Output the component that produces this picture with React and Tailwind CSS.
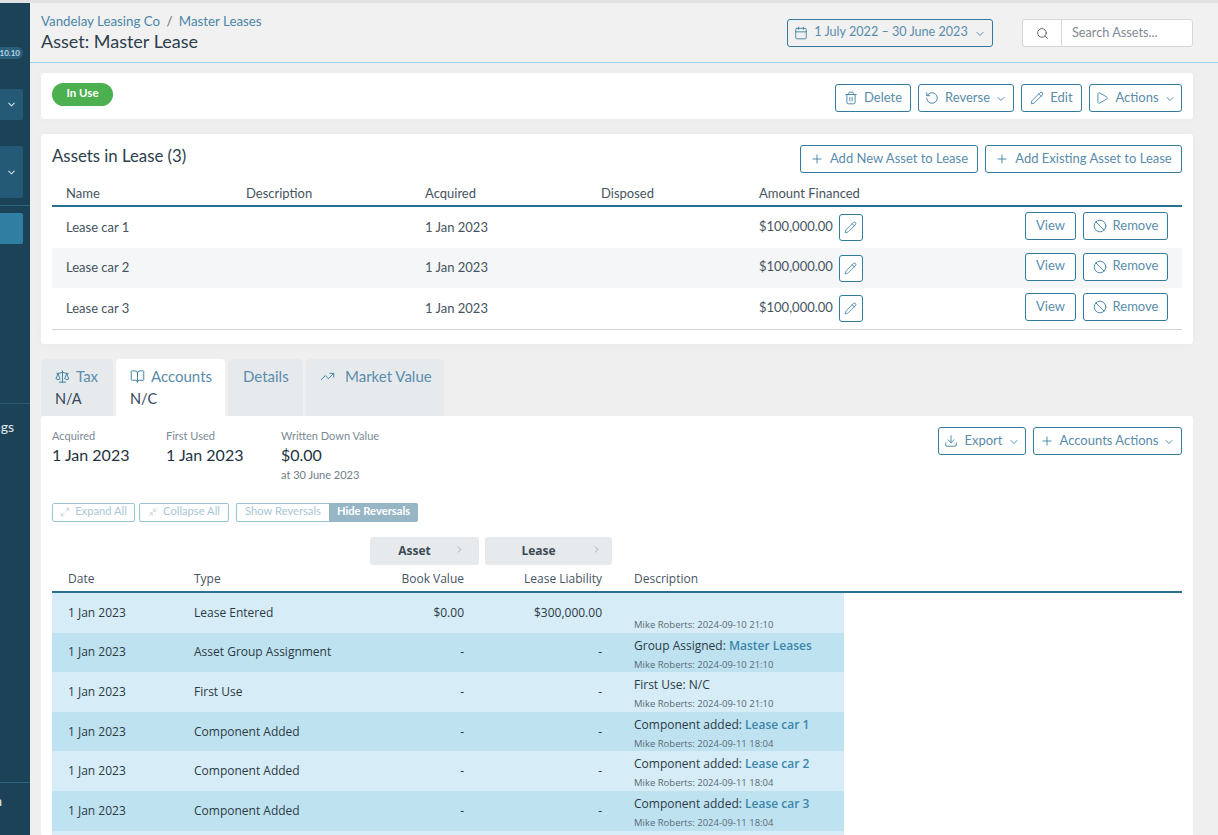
import {
  Ban,
  BookOpen,
  Calendar,
  ChevronDown,
  ChevronRight,
  Download,
  Maximize2,
  Minimize2,
  Pencil,
  Play,
  Plus,
  RotateCcw,
  Scale,
  Search,
  TrendingUp,
  Trash2
} from "lucide-react"

const assets = ["Lease car 1", "Lease car 2", "Lease car 3"]

const ledger = [
  { type: "Lease Entered", book: "$0.00", lease: "$300,000.00", meta: "Mike Roberts: 2024-09-10 21:10" },
  { type: "Asset Group Assignment", book: "-", lease: "-", label: "Group Assigned: ", link: "Master Leases", meta: "Mike Roberts: 2024-09-10 21:10" },
  { type: "First Use", book: "-", lease: "-", label: "First Use: N/C", meta: "Mike Roberts: 2024-09-10 21:10" },
  { type: "Component Added", book: "-", lease: "-", label: "Component added: ", link: "Lease car 1", meta: "Mike Roberts: 2024-09-11 18:04" },
  { type: "Component Added", book: "-", lease: "-", label: "Component added: ", link: "Lease car 2", meta: "Mike Roberts: 2024-09-11 18:04" },
  { type: "Component Added", book: "-", lease: "-", label: "Component added: ", link: "Lease car 3", meta: "Mike Roberts: 2024-09-11 18:04" }
]

function Btn({ icon: Icon, children, caret, className = "" }) {
  return (
    <button className={`h-[28px] flex items-center justify-center gap-[6px] border border-[#2f7c9f] rounded-[3px] bg-white text-[13px] text-[#5a8cab] ${className}`}>
      {Icon && <Icon size={14} strokeWidth={1.5} className="text-[#3a7f9f]" />}
      <span className="pb-[1px]">{children}</span>
      {caret && <ChevronDown size={12} strokeWidth={1.75} className="text-[#3a7f9f] -ml-[1px] mt-[1px]" />}
    </button>
  )
}

function Tab({ icon: Icon, label, sub, active, gap = "gap-[6px]", className = "" }) {
  return (
    <div className={`h-[57px] rounded-t-[4px] pt-[7px] ${active ? "bg-white" : "bg-[#e7eaed]"} ${className}`}>
      <div className={`flex items-center ${gap} text-[15px] leading-[20px] text-[#5a8cab]`}>
        {Icon && <Icon size={15} strokeWidth={1.5} className="text-[#3a7f9f]" />}
        <span>{label}</span>
      </div>
      {sub && <div className="mt-[3px] text-[14.5px] leading-[20px] text-[#33485a]">{sub}</div>}
    </div>
  )
}

function Stat({ label, value, note, className = "" }) {
  return (
    <div className={className}>
      <div className="text-[11px] leading-[14px] text-[#7b8a96]">{label}</div>
      <div className="mt-[1px] text-[16px] leading-[22px] text-[#24343f]">{value}</div>
      {note && <div className="mt-[2px] text-[11px] leading-[14px] text-[#6f7d88]">{note}</div>}
    </div>
  )
}

function Sidebar() {
  return (
    <aside className="w-[30px] shrink-0 h-[832px] bg-[#1c4258] overflow-hidden">
      <div className="w-[200px] -ml-[170px] text-white">
        <div className="h-[86px] flex justify-end items-start pt-[44px] pr-[7px]">
          <span className="h-[12px] px-[3px] rounded-full bg-[#2a5f7c] text-[8px] font-bold leading-[12px] text-[#b9d6e4]">v10.10</span>
        </div>
        <div className="h-[31px] ml-[8px] mr-[7px] rounded-[2px] bg-[#245a75] flex items-center justify-end pr-[6px]">
          <ChevronDown size={11} strokeWidth={2.25} className="text-[#d5e6ee]" />
        </div>
        <div className="h-[52px] mt-[26px] ml-[8px] mr-[7px] rounded-[2px] bg-[#245a75] flex items-center justify-end pr-[6px]">
          <ChevronDown size={11} strokeWidth={2.25} className="text-[#d5e6ee]" />
        </div>
        <div className="h-px mt-[7px] bg-[#2b6581]" />
        <div className="h-[31px] mt-[7px] ml-[8px] mr-[7px] rounded-[2px] bg-[#2f7fa3]" />
        <div className="h-px mt-[159px] bg-[#2b5a72]" />
        <div className="mt-[14px] pr-[16px] text-right text-[14px] leading-[18px] text-[#e3edf2]">Settings</div>
        <div className="h-px mt-[346px] bg-[#2b6581]" />
        <div className="mt-[9px] pr-[28px] text-right text-[14px] leading-[18px] text-[#e3edf2]">Sign in</div>
      </div>
    </aside>
  )
}

export default function App() {
  return (
    <div className="h-[835px] overflow-hidden bg-[#efefef] font-['Lato','Liberation_Sans',sans-serif] border-t-[3px] border-[#e2e2e2]">
      <div className="flex">
        <Sidebar />
        <main className="flex-1 min-w-0 h-[832px] overflow-hidden">
          {/* Header */}
          <header className="h-[60px] pl-[11px] pr-[25px] flex items-start justify-between border-b border-[#9bd3ee] bg-[#f1f1f1]">
            <div>
              <div className="mt-[10px] text-[13.3px] leading-[17px] text-[#4a86a9]">
                Vandelay Leasing Co <span className="mx-[3px] text-[#5b6d79]">/</span> Master Leases
              </div>
              <h1 className="text-[18px] leading-[22px] text-[#2c3e4c]">Asset: Master Lease</h1>
            </div>
            <div className="flex items-center mt-[16px]">
              <button className="h-[28px] w-[206px] flex items-center justify-center gap-[6px] border border-[#2f7c9f] rounded-[3px] text-[12.6px] text-[#5a8cab]">
                <Calendar size={14} strokeWidth={1.5} className="text-[#3a7f9f]" />
                <span className="pb-[1px]">1 July 2022 – 30 June 2023</span>
                <ChevronDown size={12} strokeWidth={1.75} className="text-[#3a7f9f] mt-[1px]" />
              </button>
              <div className="ml-[29px] h-[28px] w-[171px] flex bg-white border border-[#d5d8db] rounded-[3px]">
                <div className="w-[39px] flex items-center justify-center border-r border-[#d5d8db]">
                  <Search size={13} strokeWidth={1.5} className="text-[#3c4a54]" />
                </div>
                <div className="pl-[10px] pb-[1px] flex items-center text-[12.7px] text-[#7f8b94]">Search Assets...</div>
              </div>
            </div>
          </header>

          <div className="pl-[11px] pr-[25px]">
            {/* Status bar */}
            <section className="mt-[10px] h-[46px] rounded-[3px] bg-white pl-[11px] pr-[11px] flex justify-between shadow-[0_0_12px_rgba(0,0,0,0.03)]">
              <span className="mt-[10px] pb-[3px] h-[23px] w-[61px] rounded-full bg-[#4caf50] text-white text-[11.5px] font-bold flex items-center justify-center">In Use</span>
              <div className="mt-[11px] flex gap-[7px]">
                <Btn icon={Trash2} className="w-[76px]">Delete</Btn>
                <Btn icon={RotateCcw} caret className="w-[96px]">Reverse</Btn>
                <Btn icon={Pencil} className="w-[61px]">Edit</Btn>
                <Btn icon={Play} caret className="w-[93px]">Actions</Btn>
              </div>
            </section>

            {/* Assets in lease */}
            <section className="mt-[15px] h-[210px] rounded-[3px] bg-white px-[11px] pt-[11px] shadow-[0_0_12px_rgba(0,0,0,0.03)]">
              <div className="flex justify-between">
                <h2 className="mt-[1px] text-[16.8px] leading-[20px] text-[#2c3e4c]">Assets in Lease (3)</h2>
                <div className="flex gap-[7px]">
                  <Btn icon={Plus} className="w-[178px]">Add New Asset to Lease</Btn>
                  <Btn icon={Plus} className="w-[197px]">Add Existing Asset to Lease</Btn>
                </div>
              </div>
              <div className="mt-[12px] h-[22px] grid grid-cols-[180px_179px_176px_158px_1fr] pl-[14px] text-[13px] leading-[16px] text-[#46545f] border-b-2 border-[#2b7090]">
                <span>Name</span>
                <span>Description</span>
                <span>Acquired</span>
                <span>Disposed</span>
                <span>Amount Financed</span>
              </div>
              <div className="border-b border-[#d2d4d8]">
                {assets.map((name, i) => (
                  <div key={name} className={`h-[40.7px] grid grid-cols-[359px_334px_1fr] pl-[14px] pr-[14px] items-center text-[13px] text-[#46545f] ${i === 1 ? "bg-[#f4f6f7]" : ""}`}>
                    <span>{name}</span>
                    <span>1 Jan 2023</span>
                    <div className="flex items-center justify-between">
                      <div className="flex items-center gap-[6px]">
                        <span className="pb-[2px]">$100,000.00</span>
                        <button className="w-[24px] h-[27px] flex items-center justify-center border border-[#2f7c9f] rounded-[3px] bg-white">
                          <Pencil size={13} strokeWidth={1.5} className="text-[#3a7f9f]" />
                        </button>
                      </div>
                      <div className="flex gap-[7px] -mt-[3px]">
                        <Btn className="w-[51px]">View</Btn>
                        <Btn icon={Ban} className="w-[85px]">Remove</Btn>
                      </div>
                    </div>
                  </div>
                ))}
              </div>
            </section>

            {/* Tabs */}
            <div className="mt-[15px] flex gap-[3px] items-start">
              <Tab icon={Scale} label="Tax" sub="N/A" gap="gap-[6px]" className="w-[72px] pl-[14px]" />
              <Tab icon={BookOpen} label="Accounts" sub="N/C" active className="w-[109px] pl-[14px]" />
              <Tab label="Details" className="w-[75px] pl-[15px]" />
              <Tab icon={TrendingUp} label="Market Value" gap="gap-[10px]" className="w-[138px] pl-[14px]" />
            </div>

            {/* Accounts panel */}
            <section className="bg-white rounded-[3px] px-[11px] pt-[13px] h-[420px]">
              <div className="flex justify-between">
                <div className="flex">
                  <Stat label="Acquired" value="1 Jan 2023" className="w-[114px]" />
                  <Stat label="First Used" value="1 Jan 2023" className="w-[115px]" />
                  <Stat label="Written Down Value" value="$0.00" note="at 30 June 2023" />
                </div>
                <div className="flex gap-[7px] mt-[-2px]">
                  <Btn icon={Download} caret className="w-[88px]">Export</Btn>
                  <Btn icon={Plus} caret className="w-[149px]">Accounts Actions</Btn>
                </div>
              </div>

              <div className="mt-[21px] flex gap-[4px] text-[11.2px] text-[#a9c6d5]">
                <button className="h-[19px] w-[83px] pb-[2px] flex items-center justify-center gap-[5px] border border-[#9dc4d6] rounded-[2px]">
                  <Maximize2 size={10} strokeWidth={1.5} />Expand All
                </button>
                <button className="h-[19px] w-[90px] pb-[2px] flex items-center justify-center gap-[5px] border border-[#9dc4d6] rounded-[2px]">
                  <Minimize2 size={10} strokeWidth={1.5} />Collapse All
                </button>
                <div className="ml-[3px] h-[19px] w-[182px] flex">
                  <div className="w-[93px] pb-[2px] flex items-center justify-center border border-r-0 border-[#9dc4d6] rounded-l-[2px]">Show Reversals</div>
                  <div className="flex-1 pb-[2px] flex items-center justify-center rounded-r-[2px] bg-[#96b6c6] text-white font-bold">Hide Reversals</div>
                </div>
              </div>

              <div className="mt-[15px] ml-[318px] flex gap-[6px] font-['Open_Sans','Lato',sans-serif]">
                <GroupHead label="Asset" className="w-[109px]" caretClass="right-[14px]" />
                <GroupHead label="Lease" className="w-[127px]" caretClass="right-[10px]" />
              </div>

              <div className="font-['Open_Sans','Lato',sans-serif]">
                <div className="mt-[1px] h-[27px] grid grid-cols-[126px_170px_100px_138px_1fr] pl-[16px] items-center text-[12px] text-[#46545f] border-b-2 border-[#2b7090]">
                  <span>Date</span>
                  <span>Type</span>
                  <span className="text-right">Book Value</span>
                  <span className="text-right">Lease Liability</span>
                  <span className="pl-[32px]">Description</span>
                </div>
                <div className="w-[792px]">
                  {ledger.map((row, i) => (
                    <div key={i} className={`h-[39.6px] grid grid-cols-[126px_170px_100px_138px_1fr] pl-[16px] items-center text-[12px] text-[#2c3a44] ${i % 2 === 0 ? "bg-[#d6ecf7]" : "bg-[#bfe2f1]"}`}>
                      <span>1 Jan 2023</span>
                      <span>{row.type}</span>
                      <span className="text-right">{row.book}</span>
                      <span className="text-right">{row.lease}</span>
                      <div className="pl-[32px] flex flex-col justify-end h-full pb-[0.5px]">
                        {row.label && (
                          <div className="leading-[18px]">
                            {row.label}
                            {row.link && <span className="font-semibold text-[#3b86ab]">{row.link}</span>}
                          </div>
                        )}
                        <div className="mt-[3px] text-[9.5px] leading-[14px] text-[#5b6a75]">{row.meta}</div>
                      </div>
                    </div>
                  ))}
                  <div className="h-[40px] bg-[#d6ecf7]" />
                </div>
              </div>
            </section>
          </div>
        </main>
      </div>
    </div>
  )
}

function GroupHead({ label, className = "", caretClass = "" }) {
  return (
    <div className={`relative h-[28px] pr-[20px] rounded-[3px] bg-[#e7eaed] flex items-center justify-center text-[12px] font-bold text-[#3d4a54] ${className}`}>
      {label}
      <ChevronRight size={11} strokeWidth={1.25} className={`absolute top-[7px] text-[#7f8b94] ${caretClass}`} />
    </div>
  )
}
